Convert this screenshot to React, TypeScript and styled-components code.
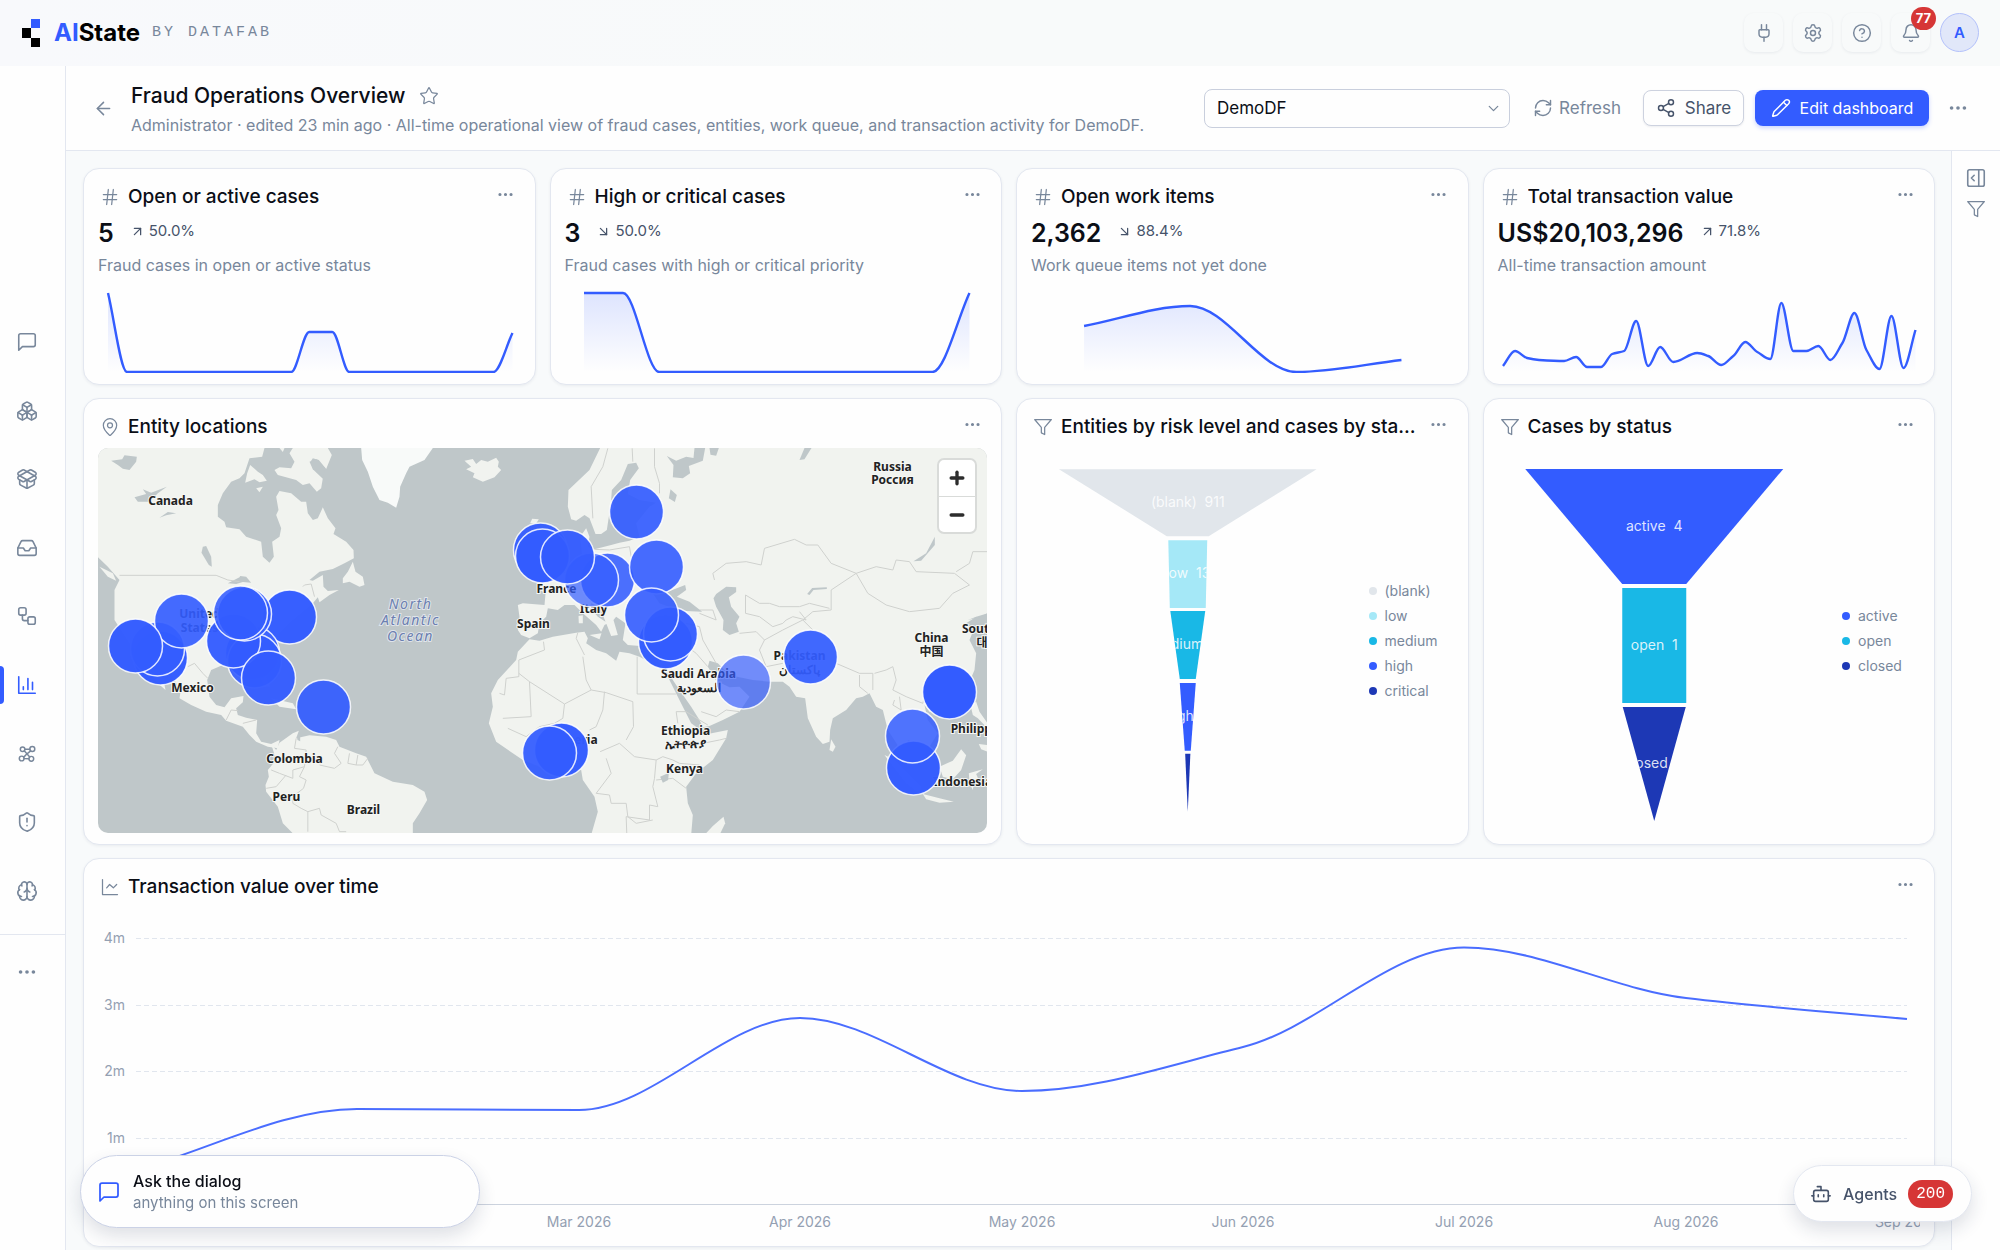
import React, { useId } from "react";
import styled, { createGlobalStyle } from "styled-components";
import {
  ArrowLeft, ArrowDownRight, ArrowUpRight, Bell, Bot, Boxes, Brain, ChevronDown,
  CircleHelp, Ellipsis, Hash, Inbox, MapPin, Minus, PackageOpen, PanelRightOpen,
  Pencil, Plug, Plus, RefreshCw, Settings, Share2, ShieldAlert, Star, Workflow,
} from "lucide-react";

const c = {
  blue: "#335cff",
  navy: "#1d38b5",
  cyan: "#19b8e6",
  sky: "#a5e8f7",
  pale: "#e1e6eb",
  ink: "#0b0e16",
  slate: "#46536a",
  muted: "#78879b",
  faint: "#94a0b2",
  line: "#e3e7f0",
  canvas: "#f8fafb",
  red: "#d63636",
};

const GlobalStyle = createGlobalStyle`
  *, *::before, *::after { box-sizing: border-box; }
  body { margin: 0; background: ${c.canvas}; }
  body, button, select { font-family: Inter, "Liberation Sans", sans-serif; color: ${c.ink}; }
  button { border: 0; background: none; padding: 0; cursor: pointer; }
  h1, h2, p { margin: 0; }
`;

/* ---------- shell ---------- */

const Shell = styled.div`
  min-height: 100vh;
  display: flex;
  flex-direction: column;
`;

const TopBar = styled.header`
  display: flex;
  align-items: center;
  justify-content: space-between;
  height: 66px;
  padding: 0 21px 1px 22px;
  background: linear-gradient(90deg, #f8f9fc, #f8fafa 50%);
`;

const Brand = styled.a`
  display: flex;
  align-items: center;
  text-decoration: none;
  color: #000;
  font-size: 24px;
  font-weight: 700;
  svg { margin-right: 14px; }
  span { color: ${c.blue}; }
`;

const Byline = styled.small`
  margin-left: 12px;
  font-family: "Liberation Mono", monospace;
  font-size: 15px;
  font-weight: 400;
  letter-spacing: 3px;
  color: ${c.muted};
`;

const TopActions = styled.div`
  display: flex;
  align-items: center;
  gap: 10px;
`;

const TopButton = styled.button`
  position: relative;
  display: grid;
  place-items: center;
  width: 39px;
  height: 39px;
  border-radius: 10px;
  color: ${c.muted};
  box-shadow: 0 1px 3px rgba(40, 55, 90, 0.08);
`;

const CountBadge = styled.span`
  position: absolute;
  top: -6px;
  right: -6px;
  height: 23px;
  padding: 0 5px;
  border-radius: 12px;
  background: ${c.red};
  color: #fff;
  font-size: 13px;
  line-height: 23px;
  font-weight: 700;
`;

const Avatar = styled.button`
  width: 39px;
  height: 39px;
  border: 1px solid #b3c1fb;
  border-radius: 50%;
  background: #e1e7f9;
  color: ${c.blue};
  font-size: 15px;
  font-weight: 600;
`;

const Body = styled.div`
  flex: 1;
  display: flex;
`;

const SideNav = styled.nav`
  flex: none;
  width: 66px;
  padding-top: 242px;
  background: #fefefe;
  border-right: 1px solid ${c.line};
`;

const NavList = styled.div`
  display: grid;
  grid-auto-rows: 1fr;
  height: 617px;
`;

const NavItem = styled.a<{ $active?: boolean }>`
  position: relative;
  display: flex;
  align-items: center;
  min-height: 68px;
  padding-left: 16px;
  color: ${(p) => (p.$active ? c.blue : c.muted)};
  &::before {
    content: "";
    display: ${(p) => (p.$active ? "block" : "none")};
    position: absolute;
    left: 0;
    width: 4px;
    height: 38px;
    border-radius: 0 4px 4px 0;
    background: ${c.blue};
  }
`;

const NavMore = styled.div`
  margin-top: 9px;
  padding-top: 3px;
  border-top: 1px solid ${c.line};
`;

const Main = styled.main`
  flex: 1;
  min-width: 0;
  display: flex;
  flex-direction: column;
`;

/* ---------- page header ---------- */

const PageHeader = styled.div`
  display: flex;
  align-items: center;
  height: 85px;
  padding: 0 30px 0 25px;
  background: #fefefe;
  border-bottom: 1px solid ${c.line};
`;

const IconButton = styled.button`
  display: grid;
  place-items: center;
  flex: none;
  width: 24px;
  height: 24px;
  color: ${c.muted};
`;

const Heading = styled.div`
  flex: 1;
  min-width: 0;
  margin-left: 16px;
  padding-top: 3px;
`;

const TitleLine = styled.div`
  display: flex;
  align-items: center;
  gap: 12px;
  h1 { font-size: 21px; line-height: 28px; font-weight: 500; }
`;

const Meta = styled.p`
  margin-top: 3px;
  font-size: 16px;
  line-height: 24px;
  color: ${c.muted};
  white-space: nowrap;
  overflow: hidden;
  text-overflow: ellipsis;
`;

const PageActions = styled.div`
  display: flex;
  align-items: center;
  flex: none;
`;

const SelectWrap = styled.label`
  display: grid;
  align-items: center;
  width: 306px;
  > * { grid-area: 1 / 1; }
  svg { justify-self: end; margin-right: 8px; color: ${c.muted}; pointer-events: none; }
`;

const Select = styled.select`
  appearance: none;
  width: 100%;
  height: 39px;
  padding: 0 12px;
  border: 1px solid #c9cfdd;
  border-radius: 8px;
  background: #fefefe;
  font-size: 17px;
`;

const Action = styled.button<{ $kind: "plain" | "outline" | "solid" }>`
  display: flex;
  align-items: center;
  justify-content: center;
  gap: ${(p) => (p.$kind === "plain" ? 6 : 9)}px;
  height: 36px;
  font-size: ${(p) => (p.$kind === "solid" ? 16 : 17)}px;
  border-radius: 8px;
  white-space: nowrap;
  ${(p) => p.$kind === "plain" && `margin: 0 22px 0 23px; color: ${c.muted};`}
  ${(p) => p.$kind === "outline" && `width: 101px; border: 1px solid #cdd2df; color: ${c.slate}; background: #fefefe; box-shadow: 0 1px 2px rgba(30,40,80,.08);`}
  ${(p) => p.$kind === "solid" && `width: 174px; margin: 0 17px 0 11px; color: #fff; background: ${c.blue}; box-shadow: 0 2px 4px rgba(51,92,255,.25);`}
`;

/* ---------- dashboard ---------- */

const Workspace = styled.div`
  flex: 1;
  display: flex;
`;

const Grid = styled.div`
  flex: 1;
  min-width: 0;
  display: grid;
  grid-template-columns: repeat(4, minmax(0, 1fr));
  align-content: start;
  gap: 13px 14px;
  padding: 17px 16px 3px 17px;
`;

const RightRail = styled.aside`
  flex: none;
  display: flex;
  flex-direction: column;
  align-items: center;
  gap: 7px;
  width: 49px;
  padding-top: 15px;
  background: #fefefe;
  border-left: 1px solid ${c.line};
`;

const CardBox = styled.section<{ $span: number }>`
  grid-column: span ${(p) => p.$span};
  display: flex;
  flex-direction: column;
  padding: 13px 14px 11px;
  border: 1px solid ${c.line};
  border-radius: 16px;
  background: #fefefe;
  box-shadow: 0 1px 3px rgba(40, 55, 90, 0.07);
`;

const CardHead = styled.div`
  display: flex;
  align-items: center;
  height: 30px;
  padding: 0 3px 0 2px;
  color: ${c.muted};
  > svg { flex: none; }
  > button { align-self: flex-start; margin-left: auto; }
  h2 {
    flex: 0 1 auto;
    margin: 0 8px;
    overflow: hidden;
    text-overflow: ellipsis;
    white-space: nowrap;
    color: ${c.ink};
    font-size: 19px;
    line-height: 24px;
    font-weight: 500;
  }
`;

const CardBody = styled.div<{ $height: number }>`
  display: flex;
  height: ${(p) => p.$height}px;
  margin-top: 6px;
`;

const ValueLine = styled.div`
  display: flex;
  align-items: center;
  gap: 16px;
  margin-top: 5px;
  strong { font-size: 25px; line-height: 32px; font-weight: 600; }
`;

const Delta = styled.span`
  display: flex;
  align-items: center;
  gap: 4px;
  margin-bottom: 4px;
  color: ${c.slate};
  font-size: 15px;
  line-height: 20px;
`;

const Caption = styled.p`
  margin: 4px 0 11px;
  font-size: 16px;
  line-height: 24px;
  color: ${c.muted};
`;

const Drawing = styled.svg`
  display: block;
  flex: 1;
  min-width: 0;
  width: 100%;
  height: 100%;
`;

const SparkBox = styled.div`
  display: flex;
  height: 85px;
`;

const Legend = styled.ul<{ $width: number }>`
  flex: none;
  align-self: center;
  width: ${(p) => p.$width}px;
  margin: 0;
  padding: 0;
  list-style: none;
  font-size: 14px;
  line-height: 25px;
  color: ${c.muted};
`;

const LegendItem = styled.li<{ $color: string }>`
  display: flex;
  align-items: center;
  gap: 8px;
  &::before {
    content: "";
    width: 8px;
    height: 8px;
    border-radius: 50%;
    background: ${(p) => p.$color};
  }
`;

const MapBox = styled.div`
  position: relative;
  flex: 1;
  display: flex;
  overflow: hidden;
  border-radius: 10px;
  background: #bfc7c9;
`;

const ZoomControls = styled.div`
  position: absolute;
  top: 10px;
  right: 10px;
  display: grid;
  width: 40px;
  border: 2px solid #d9dbd9;
  border-radius: 7px;
  background: #fff;
  button { display: grid; place-items: center; height: 36px; color: #2d2d2d; }
  button + button { border-top: 1px solid #d9dbd9; }
`;

/* ---------- floating controls ---------- */

const AskPill = styled.button`
  position: fixed;
  left: 80px;
  bottom: 22px;
  display: flex;
  align-items: center;
  gap: 12px;
  width: 400px;
  height: 73px;
  padding: 0 16px;
  border: 1px solid #cbd2e6;
  border-radius: 37px;
  background: #fefefe;
  box-shadow: 0 8px 18px rgba(30, 40, 80, 0.14);
  color: ${c.blue};
  text-align: left;
  font-size: 15px;
  line-height: 21px;
  b, span { display: block; font-weight: 400; }
  b { color: ${c.ink}; font-weight: 500; font-size: 16px; }
  span { color: ${c.muted}; }
`;

const AgentsPill = styled.button`
  position: fixed;
  right: 28px;
  bottom: 28px;
  display: flex;
  align-items: center;
  gap: 11px;
  height: 57px;
  padding: 0 18px 0 16px;
  border: 1px solid ${c.line};
  border-radius: 29px;
  background: #fefefe;
  box-shadow: 0 8px 18px rgba(30, 40, 80, 0.14);
  color: ${c.slate};
  font-size: 16px;
  font-weight: 500;
  span {
    padding: 0 8px;
    border-radius: 14px;
    background: ${c.red};
    color: #fff;
    font-family: "Liberation Mono", monospace;
    font-size: 16px;
    line-height: 28px;
  }
`;

/* ---------- icons ---------- */

type GlyphProps = { d: string; size?: number; width?: number; children?: React.ReactNode };
const Glyph = ({ d, size = 20, width = 1.75, children }: GlyphProps) => (
  <svg width={size} height={size} viewBox="0 0 24 24" fill="none" stroke="currentColor"
    strokeWidth={width} strokeLinecap="round" strokeLinejoin="round" aria-hidden>
    <path d={d} />
    {children}
  </svg>
);
const chatPath = "M21 15a2 2 0 0 1-2 2H7l-4 4V5a2 2 0 0 1 2-2h14a2 2 0 0 1 2 2z";
const funnelPath = "M22 3H2l8 9.46V19l4 2v-8.54z";
const FunnelGlyph = () => <Glyph d={funnelPath} size={20} width={1.5} />;
const LinesGlyph = () => <Glyph d="M3 3v18h18M20 9l-4 4-4.500-4-3.500 4" size={20} width={1.5} />;
const GraphGlyph = () => (
  <Glyph d="M9 8.500l6 6.700M8.800 16.900l5.300.2M16 8.600l-4 3.200-3.500 3.600M9.900 6.800h5.300" size={22} width={1.6}>
    <circle cx="7.200" cy="6.800" r="2.500" /><circle cx="17.800" cy="6.500" r="2.700" />
    <circle cx="6.200" cy="16.900" r="2.600" /><circle cx="16.700" cy="17.200" r="2.600" />
  </Glyph>
);

const LogoMark = () => (
  <svg width="18" height="28" viewBox="0 0 18 28" aria-hidden>
    <path d="M9 0h9v9H9z" fill={c.blue} />
    <path d="M0 9h9v10H0zM9 19h9v9H9z" fill="#000" />
  </svg>
);

/* ---------- charts ---------- */

type Pt = [number, number];

/** Monotone cubic path through the points. */
function smoothPath(p: Pt[]) {
  const n = p.length;
  const slope = p.slice(1).map((q, i) => (q[1] - p[i][1]) / (q[0] - p[i][0]));
  const m = p.map((_, i) => {
    if (i === 0) return slope[0];
    if (i === n - 1) return slope[n - 2];
    const a = slope[i - 1];
    const b = slope[i];
    if (a * b <= 0) return 0;
    return (Math.sign(a) * Math.min(Math.abs(a), Math.abs(b), Math.abs(a + b) / 4)) * 1.5;
  });
  let d = `M${p[0]}`;
  for (let i = 0; i < n - 1; i++) {
    const h = (p[i + 1][0] - p[i][0]) / 3;
    d += `C${p[i][0] + h},${p[i][1] + m[i] * h} ${p[i + 1][0] - h},${p[i + 1][1] - m[i + 1] * h} ${p[i + 1]}`;
  }
  return d;
}

function Spark({ points }: { points: Pt[] }) {
  const id = useId();
  const d = smoothPath(points);
  return (
    <SparkBox>
      <Drawing viewBox="0 0 422 85" preserveAspectRatio="none" aria-hidden>
        <defs>
          <linearGradient id={id} gradientUnits="userSpaceOnUse" x1="0" y1="5" x2="0" y2="84">
            <stop offset="0" stopColor={c.blue} stopOpacity="0.16" />
            <stop offset="1" stopColor={c.blue} stopOpacity="0" />
          </linearGradient>
        </defs>
        <path d={`${d}V84H${points[0][0]}Z`} fill={`url(#${id})`} />
        <path d={d} fill="none" stroke={c.blue} strokeWidth="2.4" />
      </Drawing>
    </SparkBox>
  );
}

type Slice = { label: string; color: string; y: [number, number]; top: number; bottom: number };

function Funnel({ slices, cx }: { slices: Slice[]; cx: number }) {
  const id = useId();
  return (
    <Drawing viewBox="0 0 338 385" role="img" aria-label="Funnel chart">
      {slices.map((s, i) => {
        const [y0, y1] = s.y;
        const shape = `${cx - s.top},${y0} ${cx + s.top},${y0} ${cx + s.bottom},${y1} ${cx - s.bottom},${y1}`;
        return (
          <g key={i}>
            <clipPath id={`${id}${i}`}><polygon points={shape} /></clipPath>
            <polygon points={shape} fill={s.color} />
            <text x={cx} y={(y0 + y1) / 2 + 4} textAnchor="middle" fontSize="14" fill="#fff"
              fillOpacity="0.85" clipPath={`url(#${id}${i})`} style={{ whiteSpace: "pre" }}>
              {s.label}
            </text>
          </g>
        );
      })}
    </Drawing>
  );
}

const months: [string, number][] = [
  ["Mar 2026", 481], ["Apr 2026", 702], ["May 2026", 924], ["Jun 2026", 1145],
  ["Jul 2026", 1366], ["Aug 2026", 1588], ["Sep 2026", 1809],
];
const valueLine: Pt[] = [
  [38, 262], [259, 201], [481, 202], [702, 110], [924, 183], [1145, 139], [1366, 39.5], [1588, 90], [1809, 111],
];

function TimeChart() {
  return (
    <Drawing viewBox="0 0 1822 327" preserveAspectRatio="xMinYMin meet" role="img" aria-label="Transaction value by month">
      {["4m", "3m", "2m", "1m"].map((t, i) => (
        <g key={t}>
          <text x="27" y={35 + i * 66.6} textAnchor="end" fontSize="14" fill={c.faint}>{t}</text>
          <path d={`M38 ${Math.round(30 + i * 66.6) + 0.5}H1809`} stroke="#e1e6ee" strokeDasharray="5 3" />
        </g>
      ))}
      <path d="M38 296.5H1809" stroke="#ccd3de" />
      {months.map(([t, x]) => (
        <text key={t} x={x} y="319" textAnchor="middle" fontSize="14" fill={c.faint}>{t}</text>
      ))}
      <path d={smoothPath(valueLine)} fill="none" stroke="#4a6dff" strokeWidth="2" />
    </Drawing>
  );
}

/* ---------- map ---------- */

const westLand = [
  "54,174 555,174 548,200 510,205 495,250 480,265 455,275 430,310 415,345 415,380 435,395 440,412 480,418 500,440 545,455 550,500 570,518 583,500 578,455 600,440 605,415 590,375 597,360 590,320 600,303 635,310 665,335 680,335 685,370 700,390 715,385 730,352 745,385 768,415 762,432 800,455 822,480 823,505 795,520 760,537 720,545 690,570 700,572 730,555 732,590 745,603 778,600 750,615 720,637 715,622 700,640 640,690 600,730 560,790 550,830 572,890 555,890 535,850 470,830 430,825 395,840 383,870 390,920 410,945 435,952 455,925 492,918 490,937 470,955 475,975 500,983 533,990 530,1030 545,1055 575,1062 600,1050 595,1075 565,1070 530,1055 510,1035 490,1010 440,992 425,975 380,965 335,945 300,925 303,905 270,840 252,870 258,900 235,880 180,800 150,760 105,690 105,600 120,570 85,530 54,500",
  "600,174 615,174 610,186",
  "585,240 600,232 635,235 645,215 630,190 640,174 745,174 757,195 740,237 718,210 700,205 693,215 700,235 730,265 725,295 712,305 690,280 670,285 650,270 595,255",
  "512,225 535,245 550,255 562,272 540,277 525,268 497,278 503,250",
  "530,295 550,290 540,307",
  "820,515 828,545 850,560 855,585 840,590 810,575 790,580 790,565 805,545",
  "60,530 100,550 110,572 85,560",
  "1155,212 1180,207 1190,222 1205,210 1225,215 1250,203 1258,215 1255,230 1265,240 1245,262 1210,275 1180,262 1185,250 1160,238 1175,230",
  "575,1062 590,1080 600,1058 640,1030 658,1022 650,1045 690,1036 740,1040 770,1050 780,1070 830,1090 860,1100 885,1150 940,1175 1000,1185 1035,1205 1043,1230 1020,1270 1000,1300 1000,1335 645,1335 610,1300 595,1250 560,1205 558,1185 568,1160 565,1140 590,1110",
  "575,925 640,940 650,958 600,950",
];
const westWater = [
  "95,212 128,208 135,196 172,200 170,215 150,240 130,236 115,225",
  "165,322 200,312 190,298 215,308 262,290 235,310 210,335 175,335",
  "240,383 265,366 290,370 260,376",
  "370,470 380,468 395,500 397,530 388,525 366,488",
  "445,580 480,562 482,558 500,560 515,578 490,576 470,582",
  "652,1040 662,1040 662,1054 654,1050",
  "690,215 712,208 738,235 730,266 700,238",
];
const eastLand = [
  "-65,645 -50,640 15,645 18,612 0,597 10,580 50,570 80,545 110,520 128,500 122,440 140,415 150,440 145,470 165,478 215,465 240,458 270,452 300,440 290,400 330,350 350,338 300,330 265,312 272,270 298,235 290,218 265,222 245,270 217,300 215,330 225,350 208,380 202,420 185,432 168,432 150,385 135,375 110,392 95,388 85,350 87,300 150,240 182,174 1344,174 1344,670 1310,680 1295,690 1280,700 1300,725 1290,750 1310,790 1305,840 1280,900 1230,960 1170,965 1155,945 1165,990 1195,1030 1170,1070 1130,1060 1105,1050 1120,1100 1090,1090 1045,1020 1030,960 1010,950 990,910 970,920 950,925 920,960 880,985 872,1020 870,1055 850,1062 830,1040 805,985 797,925 770,920 750,890 730,875 690,875 640,870 600,862 570,855 535,820 510,812 505,830 530,872 570,892 600,890 630,920 600,965 550,990 510,1008 490,1012 480,990 455,950 420,900 400,870 385,850 370,840 350,800 330,770 265,765 250,750 258,700 230,680 222,690 235,735 215,738 200,700 180,650 155,640 150,650 175,680 205,700 195,705 185,725 170,705 130,670 105,645 75,645 55,660 25,655 20,680 0,700 -5,730 -30,745 -55,735 -65,720 -60,680",
  "-30,748 0,752 40,740 110,728 135,725 145,745 140,760 170,780 200,790 230,812 240,785 270,790 300,800 375,840 390,870 415,920 435,960 455,1000 480,1018 490,1035 565,1020 560,1045 520,1110 470,1150 440,1190 445,1240 460,1275 455,1335 155,1335 175,1265 165,1220 130,1170 125,1140 90,1130 60,1120 0,1130 -50,1110 -80,1090 -130,1055 -152,1000 -140,950 -145,910 -125,870 -70,810 -65,785",
  "552,1280 557,1300 540,1335 495,1335 520,1308",
  "875,1048 888,1070 880,1085 870,1080",
  "1150,1212 1200,1225 1243,1235 1200,1238 1160,1228",
  "1035,1095 1062,1108 1145,1190 1140,1210 1100,1180",
  "1200,1130 1240,1112 1265,1078 1280,1096 1265,1140 1240,1168 1210,1160",
  "1288,1150 1330,1138 1310,1152 1320,1175 1305,1170 1300,1200 1290,1180",
  "1293,945 1310,935 1320,965 1344,1000 1344,1015 1315,985 1300,975",
  "1318,1062 1344,1065 1344,1085 1325,1078",
  "-28,400 -22,386 -2,388 -10,400",
  "117,678 130,676 130,700 118,700",
  "150,735 186,730 180,748",
];
const eastWater = [
  "530,612 560,590 590,592 590,606 568,622 575,650 600,680 590,700 598,725 570,735 550,720 552,690 530,650 522,625",
  "340,610 385,605 437,585 440,600 412,620 450,635 488,665 420,662 360,640",
  "382,198 410,212 440,200 462,204 465,174 497,174 490,212 448,228 452,250 430,265 400,262 402,225",
  "510,174 538,174 530,197 513,194",
  "795,174 816,174 795,208 780,210",
  "393,298 412,315 406,336 388,325",
  "1122,514 1160,490 1186,440 1186,465 1145,512",
  "803,612 818,594 862,592 862,597 822,600 810,615",
  "362,1160 388,1148 386,1170 370,1178",
  "1285,690 1310,680 1330,690 1344,700 1344,670 1320,682",
];
const westBorders = [
  "120,556 410,556 445,570 480,575", "325,830 345,820 370,850 385,865",
  "440,990 455,960 475,962", "490,1000 530,990", "650,1045 645,1075 680,1080 675,1130 640,1140 640,1165 600,1150 575,1140",
  "560,1195 590,1190 620,1155", "675,1130 660,1160 680,1170 672,1195 640,1220 640,1240 665,1255 685,1265 720,1255 725,1275 770,1300 780,1325 800,1325",
  "685,1265 685,1325", "775,1070 765,1090 785,1120 765,1135 720,1125", "810,1090 805,1120 830,1125 835,1095", "865,1105 850,1125 830,1125", "670,590 675,585 695,582 705,620",
];
const eastBorders = [
  "-120,910 -105,915 -100,865 -62,860 -62,810 15,780 12,755", "-62,850 -30,875 -25,980 -110,985", "-30,875 75,942 155,900 200,908 280,935 282,1010 260,1050", "293,800 293,912 410,912",
  "135,795 110,745 115,728", "130,800 140,870 155,900", "75,942 70,985 45,1000 0,1010 -40,1040 -95,1015", "195,905 190,960 170,1010 150,1020",
  "182,1085 240,1060 285,1100 350,1110 370,1100 400,1110", "200,1105 215,1150 170,1210 210,1215 215,1240 260,1240", "350,1110 345,1165 340,1190 355,1250 330,1245 330,1290 260,1280 262,1335",
  "415,1000 410,965 440,965 480,990 505,1005", "350,1170 400,1165 440,1195", "400,1110 420,1120 480,1125", "260,1240 265,1280 290,1300 340,1290",
  "160,385 155,290 190,230 205,175", "278,175 280,215", "345,175 345,230 360,280 360,310", "165,478 210,480 270,470 275,500",
  "525,570 520,550 560,520 620,515 665,525 675,475 765,448 800,465 835,465 875,520 950,550 875,600 875,660 820,665 790,690",
  "950,550 1010,530 1060,540 1070,510 1110,515 1130,545 1245,550 1290,585 1240,610 1200,655 1110,665 1040,645 985,610 950,550",
  "1250,545 1290,520 1300,485 1344,485", "618,670 618,615 660,640 690,640 720,650 780,650 810,640 870,655", "618,670 660,680 700,710 730,700 740,690",
  "600,730 650,725 675,750 660,780 680,830 730,820", "675,750 730,720 790,690 820,720", "440,700 480,710 490,750 530,820", "430,760 470,790 505,830",
  "480,660 520,660 530,690 480,670", "890,820 960,850 1000,850 1000,900", "960,855 960,890 985,910", "1005,850 1040,840 1060,830 1070,870 1060,900 1100,920 1150,940 1160,900",
  "1080,920 1085,960 1060,945 1065,930", "485,965 530,980 560,960 600,965", "490,1060 540,1050 560,1045", "740,690 760,680 800,690 780,665",
];

const pins: [number, number, number][] = [
  [443, 102, 0.95], [445, 108, 1], [510, 132, 0.88], [494, 132, 0.7], [470, 109, 0.96], [539, 64, 0.92], [559, 119, 0.9],
  [568, 194, 0.98], [573, 186, 0.95], [554, 167, 0.9], [646, 234, 0.68], [713, 209, 0.93], [852, 244, 1],
  [816, 320, 0.98], [815, 288, 0.85], [464, 302, 0.98], [452, 305, 0.94], [63, 210, 0.98], [60, 201, 0.8],
  [84, 173, 0.91], [38, 198, 0.98], [192, 169, 0.98], [155, 205, 0.95], [157, 213, 0.9], [136, 193, 0.96],
  [147, 166, 0.9], [143, 165, 0.88], [171, 230, 0.96], [226, 259, 0.93],
];

const labels: [string, number, number][] = [
  ["Canada", 73, 57], ["United", 102, 170], ["States", 102, 184], ["Mexico", 95, 244], ["Colombia", 197, 315],
  ["Peru", 189, 353], ["Brazil", 266, 366], ["Spain", 436, 180], ["France", 459, 145], ["Italy", 496, 165],
  ["Russia", 795, 23], ["Россия", 795, 36], ["China", 834, 194], ["中国", 834, 208], ["South Korea", 901, 185],
  ["대한민국", 901, 199], ["Philippines", 886, 285], ["Indonesia", 865, 338], ["Pakistan", 702, 212],
  ["پاکستان", 702, 226], ["Saudi Arabia", 601, 230], ["السعودية", 601, 244], ["Nigeria", 478, 296],
  ["Ethiopia", 588, 287], ["ኢትዮጵያ", 588, 300], ["Kenya", 587, 325],
];

function WorldMap() {
  return (
    <Drawing viewBox="0 0 890 385" preserveAspectRatio="xMidYMid slice" role="img" aria-label="Map of entity locations"
      fontFamily='"Noto Sans", "Noto Sans CJK SC", "Noto Sans CJK KR", sans-serif' textAnchor="middle">
      <g transform="scale(0.33333) translate(-54 -174)">
        <g fill="#f1f3ef">{westLand.map((p) => <polygon key={p} points={p} />)}</g>
        <polygon fill="#f8faf9" points="845,174 848,210 865,245 880,290 900,330 925,338 950,353 960,320 962,290 980,250 990,230 1035,210 1060,174" />
        <g fill="#bfc7c9">{westWater.map((p) => <polygon key={p} points={p} />)}</g>
        <g fill="none" stroke="#cfd1ce" strokeWidth="3">{westBorders.map((p) => <polyline key={p} points={p} />)}</g>
        <g transform="translate(1380 0)">
          <g fill="#f1f3ef">{eastLand.map((p) => <polygon key={p} points={p} />)}</g>
          <g fill="none" stroke="#cfd1ce" strokeWidth="3">{eastBorders.map((p) => <polyline key={p} points={p} />)}</g>
          <g fill="#bfc7c9">{eastWater.map((p) => <polygon key={p} points={p} />)}</g>
        </g>
      </g>
      <g fontSize="12" fontWeight="700" fill="#222" stroke="#f6f7f5" strokeWidth="2" paintOrder="stroke">
        {labels.map(([t, x, y]) => <text key={t} x={x} y={y}>{t}</text>)}
      </g>
      <g fontSize="14" fontStyle="italic" letterSpacing="1.5" fill="#6c7fb0" stroke="#dfe4ea" strokeWidth="2" paintOrder="stroke">
        <text x="313" y="161">North</text>
        <text x="313" y="177">Atlantic</text>
        <text x="313" y="193">Ocean</text>
      </g>
      {pins.map(([x, y, o]) => (
        <circle key={`${x}-${y}`} cx={x} cy={y} r="27" fill={c.blue} fillOpacity={o} stroke="#fff" strokeOpacity="0.85" strokeWidth="1.5" />
      ))}
    </Drawing>
  );
}

/* ---------- data ---------- */

const kpis: { title: string; value: string; up: boolean; delta: string; caption: string; points: Pt[] }[] = [
  {
    title: "Open or active cases", value: "5", up: true, delta: "50.0%", caption: "Fraud cases in open or active status",
    points: [[10, 5], [29, 84], [193, 84], [211, 44], [234, 44], [251, 84], [395, 84], [414, 45]],
  },
  {
    title: "High or critical cases", value: "3", up: false, delta: "50.0%", caption: "Fraud cases with high or critical priority",
    points: [[19, 5], [58, 5], [94, 84], [367, 84], [404, 5]],
  },
  {
    title: "Open work items", value: "2,362", up: false, delta: "88.4%", caption: "Work queue items not yet done",
    points: [[53, 38], [159, 18], [265, 84], [370, 72]],
  },
  {
    title: "Total transaction value", value: "US$20,103,296", up: true, delta: "71.8%", caption: "All-time transaction amount",
    points: [
      [5, 78], [17, 63], [29, 70], [41, 72], [66, 73], [78, 69], [89, 79], [103, 79], [114, 66], [126, 63], [138, 33],
      [150, 78], [162, 59], [175, 74], [199, 65], [210, 68], [223, 77], [235, 68], [247, 54], [259, 64], [272, 71],
      [283, 15], [295, 63], [308, 63], [320, 58], [332, 72], [344, 55], [356, 25], [368, 62], [381, 81], [393, 28],
      [405, 80], [417, 42],
    ],
  },
];

const riskSlices: Slice[] = [
  { label: "(blank)  911", color: c.pale, y: [21, 88], top: 129, bottom: 21 },
  { label: "low  13", color: c.sky, y: [92, 160], top: 19.5, bottom: 18 },
  { label: "medium  12", color: c.cyan, y: [163, 231], top: 17.5, bottom: 8 },
  { label: "high  5", color: c.blue, y: [235, 303], top: 8, bottom: 3 },
  { label: "", color: c.navy, y: [306, 364], top: 2.6, bottom: 0 },
];
const statusSlices: Slice[] = [
  { label: "active  4", color: c.blue, y: [21, 136], top: 129, bottom: 32 },
  { label: "open  1", color: c.cyan, y: [140, 255], top: 32, bottom: 32 },
  { label: "closed  0", color: c.navy, y: [259, 373], top: 31.5, bottom: 0 },
];

type CardProps = { icon: React.ReactNode; title: string; span?: number; children: React.ReactNode };
const Card = ({ icon, title, span = 1, children }: CardProps) => (
  <CardBox $span={span}>
    <CardHead>
      {icon}
      <h2>{title}</h2>
      <IconButton aria-label={`${title} options`}><Ellipsis size={19} /></IconButton>
    </CardHead>
    {children}
  </CardBox>
);

const navItems: { label: string; icon: React.ReactNode; active?: boolean }[] = [
  { label: "Dialog", icon: <Glyph d={chatPath} size={22} /> },
  { label: "Models", icon: <Boxes size={22} strokeWidth={1.75} /> },
  { label: "Packages", icon: <PackageOpen size={22} strokeWidth={1.75} /> },
  { label: "Inbox", icon: <Inbox size={22} strokeWidth={1.75} /> },
  { label: "Workflows", icon: <Workflow size={22} strokeWidth={1.75} /> },
  { label: "Dashboards", icon: <Glyph d="M3 3v18h18M18 17V9M13 17V5M8 17v-3" size={22} />, active: true },
  { label: "Graph", icon: <GraphGlyph /> },
  { label: "Risk", icon: <ShieldAlert size={22} strokeWidth={1.75} /> },
  { label: "Intelligence", icon: <Brain size={22} strokeWidth={1.75} /> },
];

export default function App() {
  return (
    <Shell>
      <GlobalStyle />
      <TopBar>
        <Brand href="#home">
          <LogoMark /><span>AI</span>State<Byline>BY DATAFAB</Byline>
        </Brand>
        <TopActions>
          <TopButton aria-label="Connections"><Plug size={20} strokeWidth={1.75} /></TopButton>
          <TopButton aria-label="Settings"><Settings size={20} strokeWidth={1.75} /></TopButton>
          <TopButton aria-label="Help"><CircleHelp size={20} strokeWidth={1.75} /></TopButton>
          <TopButton aria-label="Notifications">
            <Bell size={20} strokeWidth={1.75} /><CountBadge>77</CountBadge>
          </TopButton>
          <Avatar aria-label="Account">A</Avatar>
        </TopActions>
      </TopBar>

      <Body>
        <SideNav aria-label="Main">
          <NavList>
            {navItems.map((n) => (
              <NavItem key={n.label} href="#" aria-label={n.label} $active={n.active}>{n.icon}</NavItem>
            ))}
          </NavList>
          <NavMore>
            <NavItem href="#" aria-label="More"><Ellipsis size={22} /></NavItem>
          </NavMore>
        </SideNav>

        <Main>
          <PageHeader>
            <IconButton aria-label="Back"><ArrowLeft size={21} strokeWidth={1.75} /></IconButton>
            <Heading>
              <TitleLine>
                <h1>Fraud Operations Overview</h1>
                <IconButton aria-label="Favourite"><Star size={20} strokeWidth={1.5} /></IconButton>
              </TitleLine>
              <Meta>Administrator · edited 23 min ago · All-time operational view of fraud cases, entities, work queue, and transaction activity for DemoDF.</Meta>
            </Heading>
            <PageActions>
              <SelectWrap>
                <Select aria-label="Workspace" defaultValue="DemoDF"><option>DemoDF</option></Select>
                <ChevronDown size={17} strokeWidth={1.75} />
              </SelectWrap>
              <Action $kind="plain"><RefreshCw size={20} strokeWidth={1.75} />Refresh</Action>
              <Action $kind="outline"><Share2 size={20} strokeWidth={1.75} />Share</Action>
              <Action $kind="solid"><Pencil size={20} strokeWidth={1.75} />Edit dashboard</Action>
              <IconButton aria-label="More actions"><Ellipsis size={22} /></IconButton>
            </PageActions>
          </PageHeader>

          <Workspace>
            <Grid>
              {kpis.map((k) => (
                <Card key={k.title} title={k.title} icon={<Hash size={20} strokeWidth={1.5} />}>
                  <ValueLine>
                    <strong>{k.value}</strong>
                    <Delta>
                      {k.up ? <ArrowUpRight size={15} /> : <ArrowDownRight size={15} />}
                      {k.delta}
                    </Delta>
                  </ValueLine>
                  <Caption>{k.caption}</Caption>
                  <Spark points={k.points} />
                </Card>
              ))}

              <Card title="Entity locations" span={2} icon={<MapPin size={20} strokeWidth={1.5} />}>
                <CardBody $height={385}>
                  <MapBox>
                    <WorldMap />
                    <ZoomControls>
                      <button aria-label="Zoom in"><Plus size={20} strokeWidth={4} /></button>
                      <button aria-label="Zoom out"><Minus size={20} strokeWidth={4} /></button>
                    </ZoomControls>
                  </MapBox>
                </CardBody>
              </Card>

              <Card title="Entities by risk level and cases by status" icon={<FunnelGlyph />}>
                <CardBody $height={385}>
                  <Funnel slices={riskSlices} cx={157} />
                  <Legend $width={85}>
                    <LegendItem $color={c.pale}>(blank)</LegendItem>
                    <LegendItem $color={c.sky}>low</LegendItem>
                    <LegendItem $color={c.cyan}>medium</LegendItem>
                    <LegendItem $color={c.blue}>high</LegendItem>
                    <LegendItem $color={c.navy}>critical</LegendItem>
                  </Legend>
                </CardBody>
              </Card>

              <Card title="Cases by status" icon={<FunnelGlyph />}>
                <CardBody $height={385}>
                  <Funnel slices={statusSlices} cx={153} />
                  <Legend $width={78}>
                    <LegendItem $color={c.blue}>active</LegendItem>
                    <LegendItem $color={c.cyan}>open</LegendItem>
                    <LegendItem $color={c.navy}>closed</LegendItem>
                  </Legend>
                </CardBody>
              </Card>

              <Card title="Transaction value over time" span={4} icon={<LinesGlyph />}>
                <CardBody $height={327}><TimeChart /></CardBody>
              </Card>
            </Grid>

            <RightRail>
              <IconButton aria-label="Open panel"><PanelRightOpen size={22} strokeWidth={1.75} /></IconButton>
              <IconButton aria-label="Filters"><FunnelGlyph /></IconButton>
            </RightRail>
          </Workspace>
        </Main>
      </Body>

      <AskPill>
        <Glyph d={chatPath} size={24} />
        <div><b>Ask the dialog</b><span>anything on this screen</span></div>
      </AskPill>
      <AgentsPill><Bot size={22} strokeWidth={1.75} />Agents<span>200</span></AgentsPill>
    </Shell>
  );
}
